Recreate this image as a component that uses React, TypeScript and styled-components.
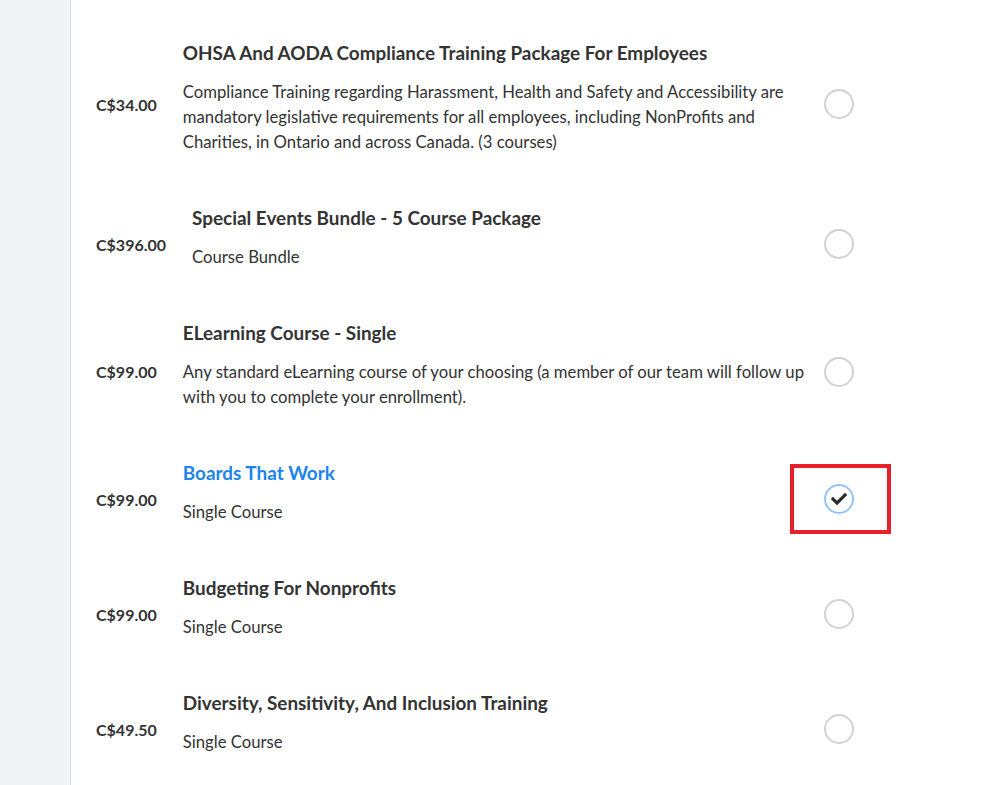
import React from "react";
import styled, { createGlobalStyle } from "styled-components";

const Global = createGlobalStyle`
  html, body { margin: 0; padding: 0; background: #fff; }
  body { font-family: Lato, "Liberation Sans", sans-serif; color: #333; }
`;

const Page = styled.div`
  display: flex;
  min-height: 785px;
  width: 1004px;
  overflow: hidden;
`;

const Sidebar = styled.aside`
  width: 70px;
  flex: 0 0 70px;
  background: #f0f4f7;
  border-right: 1px solid #dcdfe2;
`;

const Main = styled.main`
  flex: 1;
  padding: 40px 150px 40px 25px;
`;

const List = styled.div`
  display: flex;
  flex-direction: column;
  gap: 37px;
`;

const Row = styled.div`
  display: flex;
  align-items: center;
  gap: 26px;
`;

const Price = styled.div`
  font-size: 16px;
  font-weight: 700;
  color: #333;
  white-space: nowrap;
`;

const Info = styled.div`
  flex: 1;
  padding-bottom: 13px;
`;

const Title = styled.div<{ $active?: boolean }>`
  font-size: 18.9px;
  font-weight: 700;
  line-height: 26px;
  margin-bottom: 14px;
  color: ${(p) => (p.$active ? "#1b85ec" : "#333")};
`;

const Desc = styled.div`
  font-size: 16.7px;
  line-height: 25px;
  color: #333;
`;

const RadioCell = styled.div`
  position: relative;
  flex: 0 0 30px;
  margin-left: -9px;
  display: flex;
  justify-content: center;
`;

const Radio = styled.div<{ $checked?: boolean }>`
  width: 30px;
  height: 30px;
  box-sizing: border-box;
  border-radius: 50%;
  border: 2px solid ${(p) => (p.$checked ? "#93c4f7" : "#d2d2d2")};
  display: flex;
  align-items: center;
  justify-content: center;
  background: #fff;
`;

const Highlight = styled.div`
  position: absolute;
  left: -34px;
  top: -20px;
  width: 101px;
  height: 70px;
  box-sizing: border-box;
  border: 4px solid #e8202a;
  pointer-events: none;
`;

const Check = () => (
  <svg width="16" height="16" viewBox="0 0 512 512" aria-hidden>
    <path
      fill="#2b2b2b"
      d="M173.898 439.404l-166.4-166.4c-9.997-9.997-9.997-26.206 0-36.204l36.203-36.204c9.997-9.998 26.207-9.998 36.204 0L192 312.69 432.095 72.596c9.997-9.997 26.207-9.997 36.204 0l36.203 36.204c9.997 9.997 9.997 26.206 0 36.204l-294.4 294.401c-9.998 9.997-26.207 9.997-36.204-.001z"
    />
  </svg>
);

type Item = { price: string; title: string; desc: string; checked?: boolean };

const items: Item[] = [
  {
    price: "C$34.00",
    title: "OHSA And AODA Compliance Training Package For Employees",
    desc: "Compliance Training regarding Harassment, Health and Safety and Accessibility are mandatory legislative requirements for all employees, including NonProfits and Charities, in Ontario and across Canada. (3 courses)",
  },
  { price: "C$396.00", title: "Special Events Bundle - 5 Course Package", desc: "Course Bundle" },
  {
    price: "C$99.00",
    title: "ELearning Course - Single",
    desc: "Any standard eLearning course of your choosing (a member of our team will follow up with you to complete your enrollment).",
  },
  { price: "C$99.00", title: "Boards That Work", desc: "Single Course", checked: true },
  { price: "C$99.00", title: "Budgeting For Nonprofits", desc: "Single Course" },
  { price: "C$49.50", title: "Diversity, Sensitivity, And Inclusion Training", desc: "Single Course" },
];

export default function App() {
  return (
    <>
      <Global />
      <Page>
        <Sidebar />
        <Main>
          <List>
            {items.map((it, i) => (
              <Row key={i}>
                <Price>{it.price}</Price>
                <Info>
                  <Title $active={it.checked}>{it.title}</Title>
                  <Desc>{it.desc}</Desc>
                </Info>
                <RadioCell>
                  <Radio $checked={it.checked}>{it.checked && <Check />}</Radio>
                  {it.checked && <Highlight />}
                </RadioCell>
              </Row>
            ))}
          </List>
        </Main>
      </Page>
    </>
  );
}
